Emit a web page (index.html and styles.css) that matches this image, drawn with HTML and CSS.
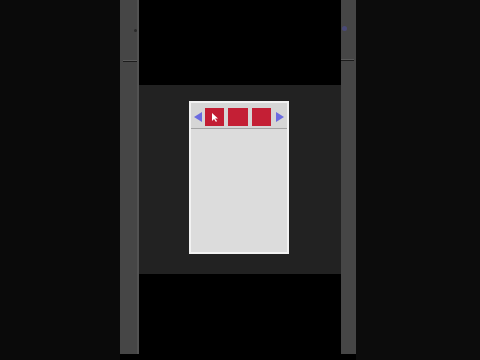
FILE: index.html
```html
<!DOCTYPE html>
<html lang="en">
<head>
  <meta charset="UTF-8" />
  <meta name="viewport" content="width=device-width, initial-scale=1" />
  <title>Slider Editor</title>
  <link rel="stylesheet" href="styles.css">
</head>
<body>
  <div class="side side-left"></div>

  <div class="rail rail-left">
    <div class="rail-body">
      <span class="rail-dot"></span>
      <span class="rail-line"></span>
    </div>
  </div>

  <main class="stage">
    <div class="stage-top"></div>
    <div class="stage-mid">
      <div class="panel">
        <div class="toolbar">
          <span class="arrow arrow-left"></span>
          <div class="tile tile-active">
            <svg class="cursor" width="6" height="9" viewBox="0 0 6 9">
              <polygon points="0,0 0,8 2,6 4,9 5,8 3,5.5 6,5.5" fill="#ffffff" />
            </svg>
          </div>
          <div class="tile"></div>
          <div class="tile"></div>
          <span class="arrow arrow-right"></span>
        </div>
        <div class="panel-body"></div>
      </div>
    </div>
    <div class="stage-bottom"></div>
  </main>

  <div class="rail rail-right">
    <div class="rail-body">
      <span class="rail-dot rail-dot-blue"></span>
      <span class="rail-line"></span>
    </div>
  </div>

  <div class="side side-right"></div>
</body>
</html>
```

FILE: styles.css
```css
/* Base */
html, body {
  margin: 0;
  width: 480px;
  height: 360px;
  overflow: hidden;
}
body {
  display: flex;
  background: #000;
  font-family: 'Liberation Sans', Arial, sans-serif;
}

/* Outer dark sides */
.side {
  height: 360px;
}
.side-left {
  width: 120px;
  background: #0a0a0a;
}
.side-right {
  width: 124px;
  background: #0c0c0c;
}

/* Grey rails */
.rail {
  height: 360px;
  background: #000;
}
.rail-left {
  width: 19px;
}
.rail-right {
  width: 15px;
}
.rail-body {
  height: 354px;
  background: #464646;
  display: flex;
  flex-direction: column;
  position: relative;
}
.rail-left .rail-body {
  border-right: 2px solid #525252;
}
.rail-dot {
  width: 3px;
  height: 3px;
  margin: 29px 0 0 14px;
  border-radius: 50%;
  background: #2a2a2a;
}
.rail-dot-blue {
  width: 5px;
  height: 5px;
  margin: 26px 0 0 1px;
  background: #4a4a78;
}
.rail-line {
  height: 1px;
  margin-top: 28px;
  margin-left: 3px;
  background: #1c1c1c;
  border-top: 1px solid #5a5a5a;
}
.rail-right .rail-line {
  margin-left: 0;
  margin-right: 2px;
}

/* Centre stage */
.stage {
  width: 202px;
  display: flex;
  flex-direction: column;
}
.stage-top {
  height: 85px;
  background: #000;
}
.stage-mid {
  height: 189px;
  background: #222222;
}
.stage-bottom {
  flex: 1;
  background: #000;
}

/* Panel */
.panel {
  width: 96px;
  height: 149px;
  margin: 16px 0 0 50px;
  border: 2px solid #f2f2f2;
  background: #dcdcdc;
  display: flex;
  flex-direction: column;
}
.toolbar {
  display: flex;
  align-items: center;
  gap: 3px;
  padding: 5px 3px 2px 3px;
  border-bottom: 1px solid #a4a4a4;
  box-shadow: 0 1px 0 #ececec;
  background: #d6d6d6;
}
.tile {
  width: 20px;
  height: 18px;
  background: #c41f35;
  position: relative;
}
.tile + .tile {
  margin-left: 1px;
}
.tile-active {
  background: #c21d33;
}
.cursor {
  position: absolute;
  left: 7px;
  top: 5px;
}
.arrow {
  width: 0;
  height: 0;
  border-top: 5px solid transparent;
  border-bottom: 5px solid transparent;
}
.arrow-left {
  border-right: 8px solid #6b6be0;
}
.arrow-right {
  margin-left: 2px;
  border-left: 8px solid #6b6be0;
}
.panel-body {
  flex: 1;
  background: #dcdcdc;
}
```
